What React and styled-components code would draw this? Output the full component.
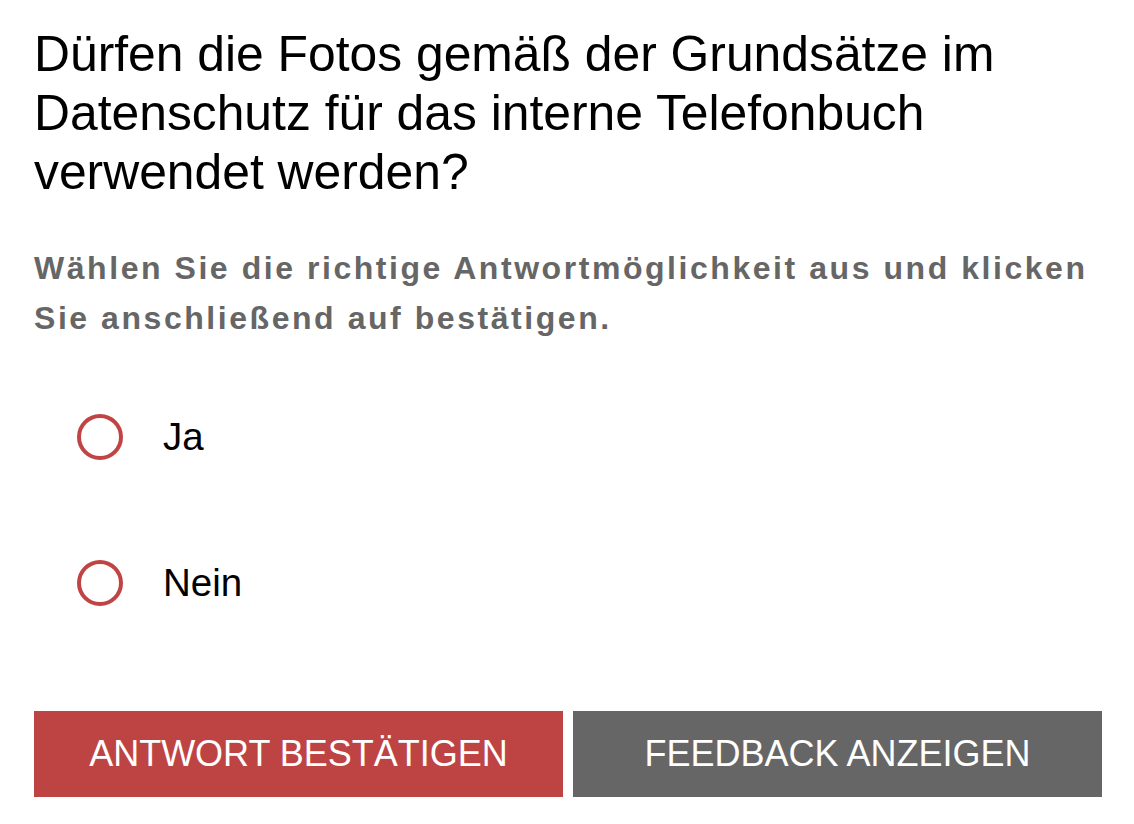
import React from 'react';
import styled, { createGlobalStyle } from 'styled-components'

const GlobalStyle = createGlobalStyle`
  body {
    margin: 0;
    background: #fff;
    font-family: "Liberation Sans", Arial, sans-serif;
  }
`

const Wrapper = styled.div`
  padding: 25px 32px 0 34px;
`

const Question = styled.h1`
  margin: 0;
  font-size: 49.8px;
  line-height: 59px;
  font-weight: 400;
  color: #000;
`

const Hint = styled.p`
  margin: 41px 0 0;
  font-size: 32px;
  line-height: 50px;
  font-weight: 700;
  letter-spacing: 2.55px;
  color: #666;
`

const Options = styled.div`
  display: flex;
  flex-direction: column;
  gap: 86px;
  margin-top: 64px;
`

const Option = styled.label`
  display: flex;
  align-items: center;
  height: 60px;
  padding-left: 43px;
  gap: 40px;
  cursor: pointer;
`

const Radio = styled.span`
  box-sizing: border-box;
  width: 46px;
  height: 46px;
  border: 4px solid #c04444;
  border-radius: 50%;
  flex-shrink: 0;
`

const OptionText = styled.span`
  font-size: 38.5px;
  color: #000;
`

const Buttons = styled.div`
  display: flex;
  gap: 10px;
  margin-top: 98px;
`

const Button = styled.button`
  flex: 1;
  height: 86px;
  border: none;
  background: ${p => p.$primary ? '#be4444' : '#666'};
  color: #fff;
  font-family: "Liberation Sans", Arial, sans-serif;
  font-size: 36px;
  text-transform: uppercase;
  cursor: pointer;
`

const App = () => (
  <Wrapper>
    <GlobalStyle />
    <Question>Dürfen die Fotos gemäß der Grundsätze im Datenschutz für das interne Telefonbuch verwendet werden?</Question>
    <Hint>Wählen Sie die richtige Antwortmöglichkeit aus und klicken Sie anschließend auf bestätigen.</Hint>
    <Options>
      <Option><Radio /><OptionText>Ja</OptionText></Option>
      <Option><Radio /><OptionText>Nein</OptionText></Option>
    </Options>
    <Buttons>
      <Button $primary>Antwort bestätigen</Button>
      <Button>Feedback anzeigen</Button>
    </Buttons>
  </Wrapper>
)

export default App;
